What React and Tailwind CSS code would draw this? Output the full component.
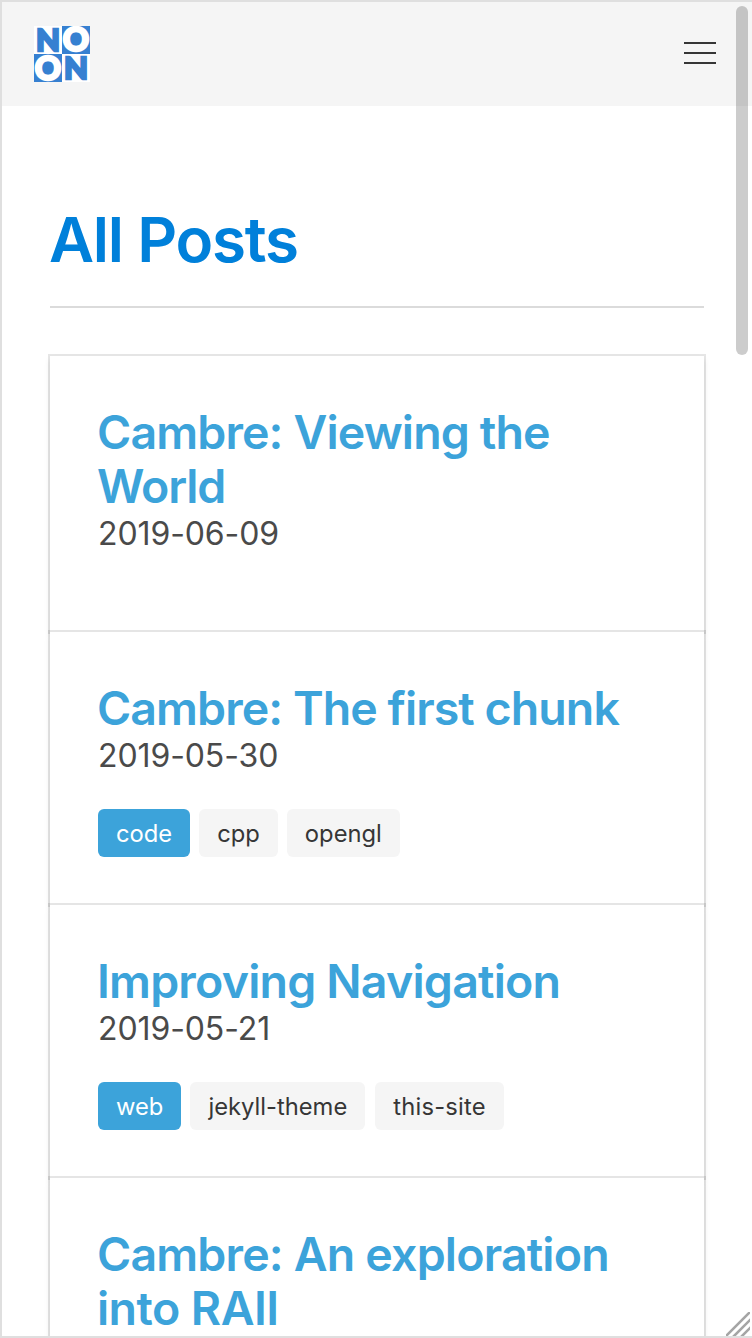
const posts = [
  { title: ["Cambre: Viewing the", "World"], ls: ["tracking-[-0.86px]", "tracking-[-1.1px]"], date: "2019-06-09", tags: [] },
  { title: ["Cambre: The first chunk"], ls: ["tracking-[-0.93px]"], date: "2019-05-30", tags: ["code", "cpp", "opengl"] },
  { title: ["Improving Navigation"], ls: ["tracking-[-0.8px]"], date: "2019-05-21", tags: ["web", "jekyll-theme", "this-site"] },
  { title: ["Cambre: An exploration", "into RAII"], ls: ["tracking-[-0.82px]", "tracking-[-0.55px]"], date: "2019-05-14", tags: [] },
];

function Logo() {
  return (
    <svg width="56" height="56" viewBox="0 0 56 56" className="block" fontFamily="Lato" fontWeight="900" textAnchor="middle">
      <rect width="56" height="56" fill="#fff" />
      <rect x="28" width="28" height="28" fill="#3680d1" />
      <rect y="28" width="28" height="28" fill="#3680d1" />
      <g strokeWidth="2.4">
        <text x="14" y="24.6" fontSize="31" fill="#3680d1" stroke="#3680d1">N</text>
        <text x="42" y="25.3" fontSize="32.5" fill="#fff" stroke="#fff">O</text>
        <text x="14" y="53.6" fontSize="32.5" fill="#fff" stroke="#fff">O</text>
        <text x="42" y="53.4" fontSize="31" fill="#3680d1" stroke="#3680d1">N</text>
      </g>
    </svg>
  );
}

function Post({ post }) {
  return (
    <article className={`relative shrink-0 bg-white px-12 pt-[49px] shadow-[0_4px_6px_rgba(10,10,10,0.1),0_0_0_2px_rgba(10,10,10,0.1)] ${post.tags.length ? "h-[273px]" : "h-[276px]"}`}>
      <h2 className="-ml-px text-[46.5px] leading-[54px] font-semibold text-[#3ca3da]">
        {post.title.map((line, i) => (
          <span key={line} className={`block whitespace-nowrap ${post.ls[i]}`}>{line}</span>
        ))}
      </h2>
      <p className="mt-px text-[32px] leading-[40px] tracking-[-0.1px] text-[#4a4a4a]">{post.date}</p>
      {post.tags.length > 0 && (
        <div className="mt-[33px] flex gap-[9px]">
          {post.tags.map((tag, i) => (
            <span key={tag} className={`flex h-12 items-center rounded-md px-[18px] pt-0.5 text-[23.75px] ${tag === "this-site" ? "ml-px tracking-[0.2px]" : ""} ${i === 0 ? "bg-[#3ca3da] text-white" : "bg-[#f5f5f5] text-[#363636]"}`}>{tag}</span>
          ))}
        </div>
      )}
    </article>
  );
}

export default function App() {
  return (
    <div className="relative flex h-[1338px] w-[752px] flex-col overflow-hidden border-y-2 border-l-2 border-[#dfdfdf] bg-white font-['Inter',sans-serif]">
      <header className="flex h-[104px] shrink-0 items-center justify-between bg-[#f5f5f5] pr-9 pl-8">
        <Logo />
        <button className="mb-0.5 flex flex-col gap-2" aria-label="Menu">
          <span className="h-0.5 w-8 bg-[#363636]" />
          <span className="h-0.5 w-8 bg-[#363636]" />
          <span className="h-0.5 w-8 bg-[#363636]" />
        </button>
      </header>
      <main className="flex min-h-0 flex-1 flex-col pr-12 pl-12">
        <h1 className="mt-[98px] -ml-px text-[62px] leading-[72px] font-semibold tracking-[-1.25px] text-[#0080da]">All Posts</h1>
        <hr className="mt-[30px] mb-12 h-0.5 shrink-0 border-0 bg-[#dbdbdb]" />
        {posts.map((p) => <Post key={p.title[0]} post={p} />)}
      </main>
      <div className="absolute top-1 right-1 h-[349px] w-3 rounded-full bg-black/20" />
      <svg className="absolute right-0.5 bottom-0" width="24" height="24" viewBox="0 0 24 24" stroke="#a5a5a5" strokeWidth="2.6">
        <path d="M-1 25L25 -1M7 25L25 7M15 25L25 15" />
      </svg>
    </div>
  );
}
